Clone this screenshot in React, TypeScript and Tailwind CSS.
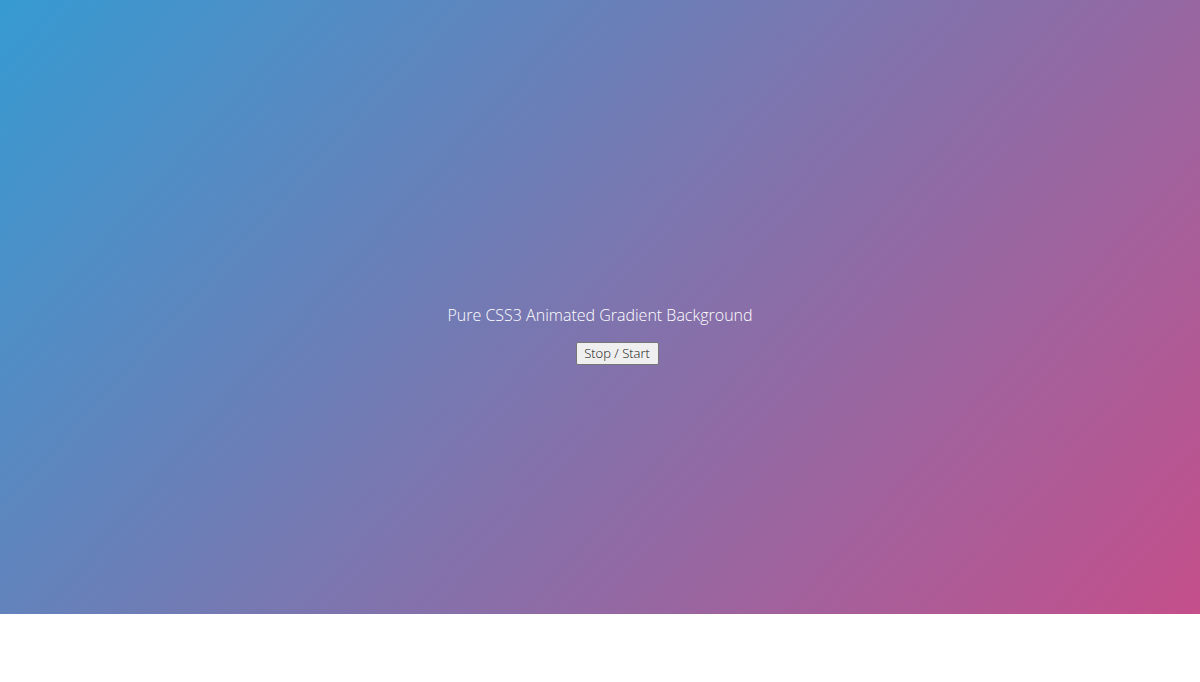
export default function App() {
  return (
    <div className="w-full" style={{ fontFamily: '"Open Sans", sans-serif' }}>
      <div className="h-[90vh] w-full bg-[linear-gradient(132deg,#369bd2_0%,#c44f8b_100%)] pt-[302px] flex flex-col items-center">
        <h1 className="text-[16px] leading-[27px] font-light text-white">
          Pure CSS3 Animated Gradient Background
        </h1>
        <button className="mt-[13px] ml-[34px] h-[23px] w-[83px] text-[13px] leading-none font-light text-[#111] bg-[#efefef] border border-[#767676] rounded-[2px]">
          Stop / Start
        </button>
      </div>
      <div className="h-[10vh] bg-white" />
    </div>
  );
}
